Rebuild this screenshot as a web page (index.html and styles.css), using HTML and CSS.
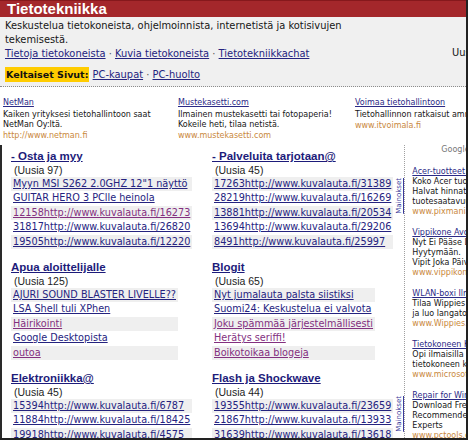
FILE: index.html
```html
<!DOCTYPE html>
<html lang="fi">
<head>
<meta charset="utf-8">
<title>Tietotekniikka</title>
<link rel="stylesheet" href="styles.css">
</head>
<body>
<div class="page">
  <h1 class="title">Tietotekniikka</h1>
  <div class="intro">
    <div class="intro-main">
      <p class="desc">Keskustelua tietokoneista, ohjelmoinnista, internetistä ja kotisivujen tekemisestä.</p>
      <p class="links"><a href="#">Tietoja tietokoneista</a> <span class="sep">·</span> <a href="#">Kuvia tietokoneista</a> <span class="sep">·</span> <a href="#">Tietotekniikkachat</a></p>
      <p class="yp"><span class="ks">Keltaiset Sivut:</span> <a href="#">PC-kaupat</a> <span class="sep">·</span> <a href="#">PC-huolto</a></p>
    </div>
    <div class="intro-side">Uusimmat viestit</div>
  </div>

  <div class="ads">
    <div class="ad">
      <a class="ad-title" href="#">NetMan</a>
      <p class="ad-text">Kaiken yrityksesi tietohallintoon saat NetMan Oy:ltä.</p>
      <p class="ad-url">http://www.netman.fi</p>
    </div>
    <div class="ad">
      <a class="ad-title" href="#">Mustekasetti.com</a>
      <p class="ad-text">Ilmainen mustekasetti tai fotopaperia! Kokeile heti, tilaa netistä.</p>
      <p class="ad-url">www.mustekasetti.com</p>
    </div>
    <div class="ad">
      <a class="ad-title" href="#">Voimaa tietohallintoon</a>
      <p class="ad-text">Tietohallinnon ratkaisut ammattilaisilta.</p>
      <p class="ad-url">www.itvoimala.fi</p>
    </div>
  </div>

  <div class="main">
    <div class="forums">
      <section class="forum">
        <h2><a href="#">- Osta ja myy</a></h2>
        <p class="new">(Uusia 97)</p>
        <div class="list">
          <a href="#">Myyn MSI S262 2.0GHZ 12"1 näyttö</a>
          <a href="#">GUITAR HERO 3 PClle heinola</a>
          <a href="#" class="visited">12158http://www.kuvalauta.fi/16273</a>
          <a href="#">31817http://www.kuvalauta.fi/26820</a>
          <a href="#">19505http://www.kuvalauta.fi/12220</a>
        </div>
      </section>
      <section class="forum">
        <h2><a href="#">- Palveluita tarjotaan@</a></h2>
        <p class="new">(Uusia 45)</p>
        <div class="list">
          <a href="#">17263http://www.kuvalauta.fi/31389</a>
          <a href="#">28219http://www.kuvalauta.fi/16269</a>
          <a href="#">13881http://www.kuvalauta.fi/20534</a>
          <a href="#">13694http://www.kuvalauta.fi/29206</a>
          <a href="#">8491http://www.kuvalauta.fi/25997</a>
        </div>
      </section>
      <section class="forum">
        <h2><a href="#">Apua aloittelijalle</a></h2>
        <p class="new">(Uusia 125)</p>
        <div class="list">
          <a href="#">AJURI SOUND BLASTER LIVELLE??</a>
          <a href="#">LSA Shell tuli XPhen</a>
          <a href="#" class="visited">Häirikointi</a>
          <a href="#">Google Desktopista</a>
          <a href="#" class="visited">outoa</a>
        </div>
      </section>
      <section class="forum">
        <h2><a href="#">Blogit</a></h2>
        <p class="new">(Uusia 65)</p>
        <div class="list">
          <a href="#">Nyt jumalauta palsta siistiksi</a>
          <a href="#">Suomi24: Keskustelua ei valvota</a>
          <a href="#" class="visited">Joku spämmää järjestelmällisesti</a>
          <a href="#" class="visited">Herätys seriffi!</a>
          <a href="#" class="visited">Boikotoikaa blogeja</a>
        </div>
      </section>
      <section class="forum">
        <h2><a href="#">Elektroniikka@</a></h2>
        <p class="new">(Uusia 45)</p>
        <div class="list">
          <a href="#">15394http://www.kuvalauta.fi/6787</a>
          <a href="#">11884http://www.kuvalauta.fi/18425</a>
          <a href="#">19918http://www.kuvalauta.fi/4575</a>
          <a href="#">10422http://www.kuvalauta.fi/9921</a>
          <a href="#">20314http://www.kuvalauta.fi/7730</a>
        </div>
      </section>
      <section class="forum">
        <h2><a href="#">Flash ja Shockwave</a></h2>
        <p class="new">(Uusia 44)</p>
        <div class="list">
          <a href="#">19355http://www.kuvalauta.fi/23659</a>
          <a href="#">21867http://www.kuvalauta.fi/13933</a>
          <a href="#">31639http://www.kuvalauta.fi/13618</a>
          <a href="#">27745http://www.kuvalauta.fi/11208</a>
          <a href="#">16630http://www.kuvalauta.fi/30011</a>
        </div>
      </section>
    </div>

    <div class="vlinks">
      <a class="vlink vlink-top" href="#">Mainokset</a>
      <a class="vlink vlink-bottom" href="#">Mainokset</a>
    </div>

    <aside class="gads">
      <p class="gads-label">Google-mainokset</p>
      <div class="gad">
        <a class="gad-title" href="#">Acer-tuotteet halvalla</a>
        <p class="gad-text">Koko Acer tuotevalikoima<br>Halvat hinnat. Hyvä<br>tuotesaatavuus</p>
        <p class="gad-url">www.pixmania.fi</p>
      </div>
      <div class="gad">
        <a class="gad-title" href="#">Vippikone Avoinna</a>
        <p class="gad-text">Nyt Ei Pääse Laina<br>Hyytymään.<br>Vipit Joka Päivä!</p>
        <p class="gad-url">www.vippikone.fi</p>
      </div>
      <div class="gad">
        <a class="gad-title" href="#">WLAN-boxi Ilmaiseksi</a>
        <p class="gad-text">Tilaa Wippies boxi<br>ja luo langaton verkko</p>
        <p class="gad-url">www.Wippies.fi</p>
      </div>
      <div class="gad">
        <a class="gad-title" href="#">Tietokoneen Käyttö</a>
        <p class="gad-text">Opi ilmaisilla demoilla<br>tietokoneen käyttöä</p>
        <p class="gad-url">www.microsoft.fi</p>
      </div>
      <div class="gad">
        <a class="gad-title" href="#">Repair for Windows</a>
        <p class="gad-text">Download Free Scan<br>Recommended by<br>Experts</p>
        <p class="gad-url">www.pctools.com</p>
      </div>
    </aside>
  </div>
</div>
<div class="frame"></div>
</body>
</html>
```

FILE: styles.css
```css
html {
  overflow: hidden;
}

body {
  margin: 0;
  background: #ffffff;
  font-family: "DejaVu Sans", Verdana, sans-serif;
  color: #161616;
}

p {
  margin: 0;
}

a {
  color: #25237f;
  text-decoration: underline;
}

.page {
  width: 468px;
}

.title {
  margin: 0;
  height: 17px;
  box-sizing: border-box;
  padding-left: 7px;
  background: #a4272b;
  border-top: 1px solid #86181c;
  color: #ffffff;
  font: bold 15px/15px "Liberation Sans", Arial, sans-serif;
  white-space: nowrap;
}

.intro {
  display: flex;
  height: 70px;
  box-sizing: border-box;
  background: #f0f0f0;
  border-bottom: 1px dotted #8c8c8c;
  font-size: 9.9px;
  line-height: 13px;
}

.intro-main {
  flex: 0 0 447px;
  box-sizing: border-box;
  padding: 2px 57px 0 5px;
}

.desc {
  line-height: 14px;
}

.intro-side {
  align-self: center;
  padding-left: 5px;
  white-space: nowrap;
  margin-top: 2px;
}

.sep {
  color: #555555;
}

.yp {
  margin-top: 8px;
}

.ks {
  background: #ffcc00;
  font-weight: bold;
  font-size: 9.5px;
  padding: 2px 1px;
  color: #111111;
}

.ads {
  display: grid;
  grid-template-columns: 175px 177px 175px;
  height: 58px;
  box-sizing: border-box;
  padding: 11px 0 0 3px;
  font-size: 8px;
  line-height: 10px;
}

.ad-title {
  display: block;
  margin-bottom: 2px;
  color: #2b2a86;
}

.ad-text {
  color: #161616;
}

.ad-url {
  margin-top: 1px;
  color: #c9883c;
}

.main {
  display: flex;
  height: 295px;
  box-sizing: border-box;
  border-left: 2px solid #2a2a2a;
}

.forums {
  flex: 0 0 390px;
  box-sizing: border-box;
  padding: 4px 0 0 9px;
  display: grid;
  grid-template-columns: 201px 1fr;
  row-gap: 11px;
  align-content: start;
}

.forum h2 {
  margin: 0;
  font: bold 11.5px/15px "Liberation Sans", Arial, sans-serif;
  white-space: nowrap;
}

.forum h2 a {
  color: #1d1b7a;
}

.new {
  padding-left: 3px;
  font: 10.5px/13px "Liberation Sans", Arial, sans-serif;
  color: #1c1c1c;
}

.list {
  width: max-content;
}

.list a {
  display: block;
  height: 14.4px;
  line-height: 14.4px;
  padding: 0 2px;
  font-size: 9.7px;
  white-space: nowrap;
  color: #25237f;
}

.list a:nth-child(odd) {
  background: #efefef;
}

.list a.visited {
  color: #83307f;
}

.vlinks {
  flex: 0 0 11px;
  display: flex;
  flex-direction: column;
  align-items: center;
}

.vlink {
  writing-mode: vertical-rl;
  transform: rotate(180deg);
  font-size: 7px;
  line-height: 8px;
  color: #3a3a9a;
  white-space: nowrap;
}

.vlink-top {
  margin-top: 33px;
}

.vlink-bottom {
  margin-top: auto;
  margin-bottom: 8px;
}

.gads {
  flex: 0 0 auto;
  border-left: 1px dotted #a0a0a0;
  padding: 0 0 0 7px;
  font-size: 8px;
  line-height: 10px;
  white-space: nowrap;
}

.gads-label {
  padding: 0 0 0 29px;
  color: #777777;
}

.gads-label + .gad {
  margin-top: 12px;
}

.gad {
  margin-bottom: 11px;
}

.gad-title {
  display: block;
  color: #2b2a86;
}

.gad-url {
  color: #c9883c;
}

.frame {
  position: fixed;
  inset: 0;
  border-right: 2px solid #222222;
  border-bottom: 2px solid #222222;
  pointer-events: none;
}
```
